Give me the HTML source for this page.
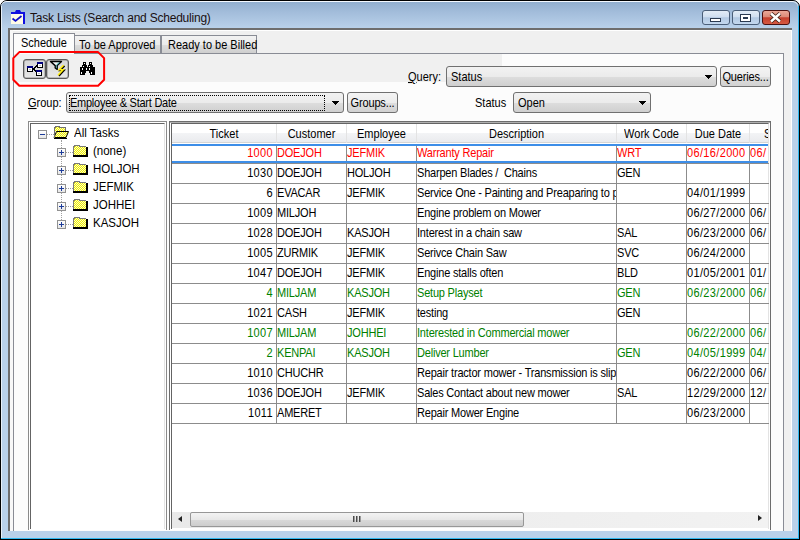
<!DOCTYPE html>
<html><head><meta charset="utf-8">
<style>
*{margin:0;padding:0;box-sizing:border-box}
html,body{width:800px;height:540px;overflow:hidden;background:#fff}
body{position:relative;font-family:"Liberation Sans",sans-serif;font-size:11px;color:#000}
.a{position:absolute}
.t{position:absolute;white-space:pre;line-height:12px;transform:scaleY(1.12);transform-origin:50% 25%}
#frame{left:0;top:0;width:800px;height:540px;background:#b9d1ea;border:1px solid #000;border-radius:7px 7px 0 0;}
#titlegrad{left:1px;top:1px;width:797px;height:27px;border-radius:6px 6px 0 0;border-top:1px solid #f4f9ff;background:linear-gradient(#92afcf 0%,#a3bddb 40%,#b9d1ea 100%)}
#client{left:8px;top:28px;width:784px;height:503px;background:#f0f0f0;border-top:2px solid #6e6e6e;border-left:2px solid #6e6e6e}
.tbtn{top:10px;width:28px;height:15px;border:1px solid #4a5e78;border-radius:3px;background:linear-gradient(#e2ecf6 0%,#d0dff0 45%,#b2c9e2 52%,#c4d8ee 100%)}
#close{background:linear-gradient(#eaa898 0%,#dc8a78 45%,#c4402e 52%,#d65a42 100%);border-color:#4a1010}
.tab{position:absolute;border:1px solid #898c95;border-bottom:none;background:linear-gradient(#f2f2f2 0%,#ebebeb 50%,#dddddd 51%,#cfcfcf 100%);white-space:pre;line-height:14px}
.combo{position:absolute;border:1px solid #707070;border-radius:3px;background:linear-gradient(#f2f2f2 0%,#ebebeb 50%,#dddddd 51%,#cfcfcf 100%)}
.btn{position:absolute;border:1px solid #707070;border-radius:3px;background:linear-gradient(#f4f4f4 0%,#ececec 50%,#dedede 51%,#d2d2d2 100%);text-align:center;letter-spacing:-0.15px}
.arrow{position:absolute;width:0;height:0;border-left:3.5px solid transparent;border-right:3.5px solid transparent;border-top:4px solid #000}
.tbb{position:absolute;border:1px solid #5a5a5a;border-radius:3px;background:linear-gradient(#d6d6d6,#e8e8e8);box-shadow:inset 0 0 0 0.5px #8a8a8a}
.row{position:absolute;left:172px;width:597px;height:20px;border-bottom:1px solid #8c8c8c;line-height:19px;font-size:11px;color:#000;letter-spacing:-0.2px}
.row span{position:absolute;top:0;height:19px;white-space:pre;overflow:hidden;padding-left:0;border-right:1px solid #8c8c8c}
.row .c0{left:0;width:105px;text-align:right;padding-right:3px}
.row .c1{left:105px;width:70px}
.row .c2{left:175px;width:70px}
.row .c3{left:245px;width:200px}
.row .c4{left:445px;width:70px}
.row .c5{left:515px;width:63px}
.row .c6{left:578px;width:19px;border-right:none}
.row .c0,.row .c5,.row .c6{letter-spacing:0.35px}
.row i{font-style:normal;display:inline-block;transform:scaleY(1.12);transform-origin:50% 50%}
.red{color:#ff0000}
.grn{color:#008000}
.hdr{position:absolute;top:0;height:19px;line-height:19px;text-align:center;border-right:1px solid #e3e3e3}
.tree .t{font-size:11.5px}
.box{position:absolute;width:9px;height:9px;border:1px solid #919191;background:linear-gradient(#fff,#e6e6e6)}
.box:before{content:"";position:absolute;left:1px;top:3px;width:5px;height:1px;background:#1d3c9a}
.box.p:after{content:"";position:absolute;left:3px;top:1px;width:1px;height:5px;background:#1d3c9a}
.dl{position:absolute;border-color:#a0a0a0;border-style:dotted;border-width:0}
.sy{font-style:normal;display:inline-block;transform:scaleY(1.12);transform-origin:50% 25%}
</style></head>
<body>
<div class="a" id="frame"></div>
<div class="a" id="titlegrad"></div>
<div class="a" style="left:799px;top:6px;width:1px;height:534px;background:#000"></div>
<div class="a" style="left:798px;top:6px;width:1px;height:533px;background:#2fb8f0"></div>
<div class="a" style="left:0;top:539px;width:800px;height:1px;background:#000"></div>
<div class="a" style="left:1px;top:538px;width:798px;height:1px;background:#2fb8f0"></div>
<div class="a" style="left:1px;top:6px;width:1px;height:532px;background:#e8f0f8"></div>
<svg class="a" style="left:11px;top:9px" width="15" height="16" viewBox="0 0 15 16">
<rect x="0" y="4" width="13" height="11" fill="#fffbe6"/>
<rect x="12" y="3" width="2" height="12" fill="#1010e0"/>
<path d="M0 3 H14 V5 H0 Z" fill="#1010e0"/>
<path d="M4 3 L5 1 H9 L10 3 Z" fill="#1010e0"/>
<path d="M1.5 9.5 L4.5 12 L10.5 7" fill="none" stroke="#1010c8" stroke-width="1.7"/>
</svg>
<div class="t" style="left:30px;top:12px;font-size:12px;transform:none;color:#1a1010;letter-spacing:-0.22px">Task Lists (Search and Scheduling)</div>
<div class="a tbtn" style="left:702px"></div>
<div class="a tbtn" style="left:732px"></div>
<div class="a tbtn" id="close" style="left:762px"></div>
<div class="a" style="left:710px;top:18px;width:11px;height:4px;background:#fff;border:1px solid #2a3a50"></div>
<div class="a" style="left:740px;top:14px;width:11px;height:8px;background:#fff;border:1px solid #2a3a50"></div>
<div class="a" style="left:743px;top:17px;width:5px;height:2px;background:#8aa;border:1px solid #2a3a50"></div>
<svg class="a" style="left:769px;top:12px" width="13" height="11" viewBox="0 0 13 11"><path d="M2 1.5 L11 9.5 M11 1.5 L2 9.5" stroke="#3a1a10" stroke-width="4"/><path d="M2 1.5 L11 9.5 M11 1.5 L2 9.5" stroke="#fff" stroke-width="2.4"/></svg>

<div class="a" id="client"></div>
<div class="a" style="left:791px;top:30px;width:1px;height:501px;background:#fff"></div>
<div class="a" style="left:10px;top:30px;width:781px;height:1px;background:#fff"></div>
<div class="a" style="left:10px;top:30px;width:3px;height:501px;background:#f8f8f8"></div>

<!-- tab page -->
<div class="a" style="left:13px;top:53px;width:771px;height:478px;background:#fcfcfc;border:1px solid #898c95;border-bottom:none"></div>
<div class="a" style="left:14px;top:54px;width:488px;height:28px;background:#f0f0f0"></div>
<div class="tab" style="left:74px;top:35px;width:87px;height:18px;padding:1px 0 0 4px"><i class="sy">To be Approved</i></div>
<div class="tab" style="left:161px;top:35px;width:96px;height:18px;padding:1px 0 0 6px"><i class="sy">Ready to be Billed</i></div>
<div class="tab" style="left:13px;top:33px;width:62px;height:21px;background:#fcfcfc;padding:1px 0 0 7px"><i class="sy">Schedule</i></div>

<!-- toolbar -->
<div class="tbb" style="left:23px;top:59px;width:23px;height:20px"></div>
<div class="tbb" style="left:46px;top:59px;width:23px;height:20px"></div>
<svg class="a" style="left:26px;top:61px" width="19" height="16" viewBox="0 0 19 16" shape-rendering="crispEdges">
<path d="M7 7 H8 V6 H9 V5 H10 V4 H11 M7 8 H8 V9 H9 V10 H10" fill="none" stroke="#000" stroke-width="1"/>
<rect x="1.5" y="5.5" width="5" height="5" fill="#fff" stroke="#000"/><rect x="1" y="5" width="6" height="2" fill="#000080"/><rect x="3" y="8" width="2" height="1" fill="#c0c0c0"/>
<rect x="11.5" y="1.5" width="5" height="5" fill="#fff" stroke="#000"/><rect x="11" y="1" width="6" height="2" fill="#000080"/><rect x="13" y="4" width="2" height="1" fill="#c0c0c0"/>
<rect x="10.5" y="9.5" width="5" height="5" fill="#fff" stroke="#000"/><rect x="10" y="9" width="6" height="2" fill="#000080"/><rect x="12" y="12" width="2" height="1" fill="#c0c0c0"/>
</svg>
<svg class="a" style="left:49px;top:60px" width="19" height="17" viewBox="0 0 19 17">
<path d="M1.5 1.5 H12.5 L8.2 5.6 V9.4 L6.2 8 V5.6 Z" fill="#f4f8f8" stroke="#000" stroke-width="1.4" stroke-linejoin="round"/>
<path d="M9.6 2.4 H11 L8 5.2 V8.4 L7.4 8 V5 Z" fill="#2a9a9a"/>
<path d="M14.6 5.2 L10.2 9.8 H14 L9 15.2" fill="none" stroke="#000" stroke-width="1.8" transform="translate(0.9,0.6)"/>
<path d="M14.6 5.2 L10.2 9.8 H14 L9 15.2" fill="none" stroke="#ffee10" stroke-width="1.6"/>
</svg>
<svg class="a" style="left:80px;top:62px" width="15" height="13" viewBox="0 0 15 13" shape-rendering="crispEdges">
<path d="M3 0h3v3h-3z M9 0h3v3h-3z M2 3h5v2h-5z M8 3h5v2h-5z M0 5h15v4h-15z M0 9h5v4h-5z M10 9h5v4h-5z M5 9h1v2h-1z M9 9h1v2h-1z" fill="#000"/>
<path d="M4 1h1v1h-1z M10 1h1v1h-1z M3 4h1v1h-1z M9 4h1v1h-1z M2 6h1v2h-1z M6 6h1v2h-1z M9 6h1v2h-1z M1 10h1v2h-1z M11 10h1v2h-1z" fill="#fff"/>
</svg>
<svg class="a" style="left:12px;top:50px" width="95" height="38" viewBox="0 0 95 38">
<path d="M7.3 2.1 H86.1 L92.1 8.1 V29.8 L86.1 35.8 H7.3 L1.3 29.8 V8.1 Z" fill="none" stroke="#ff0000" stroke-width="2" stroke-linejoin="round"/>
</svg>

<!-- query row -->
<div class="t" style="left:408px;top:70px"><u>Q</u>uery:</div>
<div class="combo" style="left:446px;top:66px;width:271px;height:21px"></div>
<div class="t" style="left:451px;top:70px">Status</div>
<svg class="a" style="left:705px;top:75px" width="7" height="4" viewBox="0 0 7 4" shape-rendering="crispEdges"><path d="M0 0h7v1h-1v1h-1v1h-1v1h-1v-1h-1v-1h-1v-1h-1z" fill="#000"/></svg>
<div class="btn" style="left:720px;top:66px;width:51px;height:21px;line-height:19px"><i class="sy">Queries...</i></div>

<!-- group row -->
<div class="t" style="left:28px;top:96px"><u>G</u>roup:</div>
<div class="combo" style="left:66px;top:92px;width:278px;height:21px"></div>
<div class="a" style="left:69px;top:95px;width:256px;height:16px;border:1px dotted #000"></div>
<div class="t" style="left:70px;top:96px;letter-spacing:-0.25px">Employee &amp; Start Date</div>
<svg class="a" style="left:332px;top:101px" width="7" height="4" viewBox="0 0 7 4" shape-rendering="crispEdges"><path d="M0 0h7v1h-1v1h-1v1h-1v1h-1v-1h-1v-1h-1v-1h-1z" fill="#000"/></svg>
<div class="btn" style="left:347px;top:92px;width:51px;height:21px;line-height:19px"><i class="sy">Groups...</i></div>
<div class="t" style="left:475px;top:96px">Status</div>
<div class="combo" style="left:513px;top:92px;width:138px;height:21px"></div>
<div class="t" style="left:518px;top:96px">Open</div>
<svg class="a" style="left:639px;top:101px" width="7" height="4" viewBox="0 0 7 4" shape-rendering="crispEdges"><path d="M0 0h7v1h-1v1h-1v1h-1v1h-1v-1h-1v-1h-1v-1h-1z" fill="#000"/></svg>

<!-- tree panel -->
<div class="a" style="left:28px;top:121px;width:139px;height:409px;border:1px solid #8a8a8a;border-bottom:none;background:#fff"></div>
<div class="a" style="left:30px;top:123px;width:135px;height:406px;border-top:1px solid #646464;border-left:1px solid #646464;border-right:1px solid #e3e3e3"></div>
<div class="tree">
<svg width="0" height="0" style="position:absolute"><defs>
<pattern id="dz" width="2" height="2" patternUnits="userSpaceOnUse"><rect width="2" height="2" fill="#fafac8"/><rect width="1" height="1" fill="#f0f000"/><rect x="1" y="1" width="1" height="1" fill="#f0f000"/></pattern>
</defs></svg>
<div class="dl" style="left:47px;top:134px;width:7px;border-top-width:1px"></div>
<div class="dl" style="left:61px;top:140px;height:84px;border-left-width:1px"></div>
<div class="box" style="left:38px;top:130px"></div>
<svg class="a" style="left:53px;top:126px" width="17" height="14" viewBox="0 0 17 14" shape-rendering="crispEdges">
<rect x="1" y="1" width="12" height="5" fill="url(#dz)"/>
<path d="M1.5 6 V1.5 H2.5 V0.5 H6.5 V1.5 H12.5 V5" fill="none" stroke="#707070"/>
<path d="M1 11.5 L3.5 5.5 H15.5 L13 11.5 Z" fill="url(#dz)" stroke="#000" shape-rendering="auto"/>
<path d="M1 5 V12" stroke="#707070"/>
<rect x="1" y="12" width="13" height="1" fill="#000"/>
</svg>
<div class="t" style="left:74px;top:126px">All Tasks</div>
<div class="dl" style="left:66px;top:152px;width:7px;border-top-width:1px"></div>
<div class="box p" style="left:57px;top:148px"></div>
<svg class="a" style="left:73px;top:144px" width="15" height="14" viewBox="0 0 15 14" shape-rendering="crispEdges"><rect x="0" y="2" width="13" height="9" fill="url(#dz)"/><rect x="1" y="1" width="5" height="1" fill="url(#dz)"/><path d="M0.5 11 V2.5 H1.5 V1 M1 1.5 H6.5 V2.5 H13" fill="none" stroke="#7a7a7a"/><rect x="0" y="11" width="15" height="2" fill="#000"/><rect x="13" y="3" width="2" height="10" fill="#000"/></svg>
<div class="t" style="left:93px;top:144px">(none)</div>
<div class="dl" style="left:66px;top:170px;width:7px;border-top-width:1px"></div>
<div class="box p" style="left:57px;top:166px"></div>
<svg class="a" style="left:73px;top:162px" width="15" height="14" viewBox="0 0 15 14" shape-rendering="crispEdges"><rect x="0" y="2" width="13" height="9" fill="url(#dz)"/><rect x="1" y="1" width="5" height="1" fill="url(#dz)"/><path d="M0.5 11 V2.5 H1.5 V1 M1 1.5 H6.5 V2.5 H13" fill="none" stroke="#7a7a7a"/><rect x="0" y="11" width="15" height="2" fill="#000"/><rect x="13" y="3" width="2" height="10" fill="#000"/></svg>
<div class="t" style="left:93px;top:162px">HOLJOH</div>
<div class="dl" style="left:66px;top:188px;width:7px;border-top-width:1px"></div>
<div class="box p" style="left:57px;top:184px"></div>
<svg class="a" style="left:73px;top:180px" width="15" height="14" viewBox="0 0 15 14" shape-rendering="crispEdges"><rect x="0" y="2" width="13" height="9" fill="url(#dz)"/><rect x="1" y="1" width="5" height="1" fill="url(#dz)"/><path d="M0.5 11 V2.5 H1.5 V1 M1 1.5 H6.5 V2.5 H13" fill="none" stroke="#7a7a7a"/><rect x="0" y="11" width="15" height="2" fill="#000"/><rect x="13" y="3" width="2" height="10" fill="#000"/></svg>
<div class="t" style="left:93px;top:180px">JEFMIK</div>
<div class="dl" style="left:66px;top:206px;width:7px;border-top-width:1px"></div>
<div class="box p" style="left:57px;top:202px"></div>
<svg class="a" style="left:73px;top:198px" width="15" height="14" viewBox="0 0 15 14" shape-rendering="crispEdges"><rect x="0" y="2" width="13" height="9" fill="url(#dz)"/><rect x="1" y="1" width="5" height="1" fill="url(#dz)"/><path d="M0.5 11 V2.5 H1.5 V1 M1 1.5 H6.5 V2.5 H13" fill="none" stroke="#7a7a7a"/><rect x="0" y="11" width="15" height="2" fill="#000"/><rect x="13" y="3" width="2" height="10" fill="#000"/></svg>
<div class="t" style="left:93px;top:198px">JOHHEI</div>
<div class="dl" style="left:66px;top:224px;width:7px;border-top-width:1px"></div>
<div class="box p" style="left:57px;top:220px"></div>
<svg class="a" style="left:73px;top:216px" width="15" height="14" viewBox="0 0 15 14" shape-rendering="crispEdges"><rect x="0" y="2" width="13" height="9" fill="url(#dz)"/><rect x="1" y="1" width="5" height="1" fill="url(#dz)"/><path d="M0.5 11 V2.5 H1.5 V1 M1 1.5 H6.5 V2.5 H13" fill="none" stroke="#7a7a7a"/><rect x="0" y="11" width="15" height="2" fill="#000"/><rect x="13" y="3" width="2" height="10" fill="#000"/></svg>
<div class="t" style="left:93px;top:216px">KASJOH</div>
</div>

<!-- grid -->
<div class="a" style="left:169px;top:121px;width:602px;height:409px;border:1px solid #6d6d6d;border-bottom:none;background:#fff"></div>
<div class="a" style="left:170px;top:122px;width:600px;height:1px;background:#b0b0b0"></div>
<div class="a" style="left:171px;top:123px;width:598px;height:406px;border-top:1px solid #646464;border-left:1px solid #646464;border-right:1px solid #e3e3e3"></div>
<div class="a" style="left:172px;top:124px;width:596px;height:19px;background:linear-gradient(#ffffff 0%,#ffffff 50%,#f3f4f6 51%,#eaebee 100%);border-bottom:1px solid #d5d5d5"></div>
<div class="a" style="left:172px;top:124px;width:596px;height:19px;overflow:hidden">
<div class="hdr" style="left:0;width:105px"><i class="sy">Ticket</i></div>
<div class="hdr" style="left:105px;width:70px"><i class="sy">Customer</i></div>
<div class="hdr" style="left:175px;width:70px"><i class="sy">Employee</i></div>
<div class="hdr" style="left:245px;width:200px"><i class="sy">Description</i></div>
<div class="hdr" style="left:445px;width:70px"><i class="sy">Work Code</i></div>
<div class="hdr" style="left:515px;width:63px"><i class="sy">Due Date</i></div>
<div class="hdr" style="left:578px;width:19px;text-align:left;padding-left:14px;border-right:none"><i class="sy">S</i></div>
</div>
<div class="row red" style="top:144px"><span class="c0"><i>1000</i></span><span class="c1"><i>DOEJOH</i></span><span class="c2"><i>JEFMIK</i></span><span class="c3"><i>Warranty Repair</i></span><span class="c4"><i>WRT</i></span><span class="c5"><i>06/16/2000</i></span><span class="c6"><i>06/</i></span></div>
<div class="row" style="top:164px"><span class="c0"><i>1030</i></span><span class="c1"><i>DOEJOH</i></span><span class="c2"><i>HOLJOH</i></span><span class="c3"><i>Sharpen Blades /  Chains</i></span><span class="c4"><i>GEN</i></span><span class="c5"></span><span class="c6"></span></div>
<div class="row" style="top:184px"><span class="c0"><i>6</i></span><span class="c1"><i>EVACAR</i></span><span class="c2"><i>JEFMIK</i></span><span class="c3"><i>Service One - Painting and Preaparing to paint</i></span><span class="c4"></span><span class="c5"><i>04/01/1999</i></span><span class="c6"></span></div>
<div class="row" style="top:204px"><span class="c0"><i>1009</i></span><span class="c1"><i>MILJOH</i></span><span class="c2"></span><span class="c3"><i>Engine problem on Mower</i></span><span class="c4"></span><span class="c5"><i>06/27/2000</i></span><span class="c6"><i>06/</i></span></div>
<div class="row" style="top:224px"><span class="c0"><i>1028</i></span><span class="c1"><i>DOEJOH</i></span><span class="c2"><i>KASJOH</i></span><span class="c3"><i>Interest in a chain saw</i></span><span class="c4"><i>SAL</i></span><span class="c5"><i>06/23/2000</i></span><span class="c6"><i>06/</i></span></div>
<div class="row" style="top:244px"><span class="c0"><i>1005</i></span><span class="c1"><i>ZURMIK</i></span><span class="c2"><i>JEFMIK</i></span><span class="c3"><i>Serivce Chain Saw</i></span><span class="c4"><i>SVC</i></span><span class="c5"><i>06/24/2000</i></span><span class="c6"></span></div>
<div class="row" style="top:264px"><span class="c0"><i>1047</i></span><span class="c1"><i>DOEJOH</i></span><span class="c2"><i>JEFMIK</i></span><span class="c3"><i>Engine stalls often</i></span><span class="c4"><i>BLD</i></span><span class="c5"><i>01/05/2001</i></span><span class="c6"><i>01/</i></span></div>
<div class="row grn" style="top:284px"><span class="c0"><i>4</i></span><span class="c1"><i>MILJAM</i></span><span class="c2"><i>KASJOH</i></span><span class="c3"><i>Setup Playset</i></span><span class="c4"><i>GEN</i></span><span class="c5"><i>06/23/2000</i></span><span class="c6"><i>06/</i></span></div>
<div class="row" style="top:304px"><span class="c0"><i>1021</i></span><span class="c1"><i>CASH</i></span><span class="c2"><i>JEFMIK</i></span><span class="c3"><i>testing</i></span><span class="c4"><i>GEN</i></span><span class="c5"></span><span class="c6"></span></div>
<div class="row grn" style="top:324px"><span class="c0"><i>1007</i></span><span class="c1"><i>MILJAM</i></span><span class="c2"><i>JOHHEI</i></span><span class="c3"><i>Interested in Commercial mower</i></span><span class="c4"></span><span class="c5"><i>06/22/2000</i></span><span class="c6"><i>06/</i></span></div>
<div class="row grn" style="top:344px"><span class="c0"><i>2</i></span><span class="c1"><i>KENPAI</i></span><span class="c2"><i>KASJOH</i></span><span class="c3"><i>Deliver Lumber</i></span><span class="c4"><i>GEN</i></span><span class="c5"><i>04/05/1999</i></span><span class="c6"><i>04/</i></span></div>
<div class="row" style="top:364px"><span class="c0"><i>1010</i></span><span class="c1"><i>CHUCHR</i></span><span class="c2"></span><span class="c3"><i>Repair tractor mower - Transmission is slipping</i></span><span class="c4"></span><span class="c5"><i>06/22/2000</i></span><span class="c6"><i>06/</i></span></div>
<div class="row" style="top:384px"><span class="c0"><i>1036</i></span><span class="c1"><i>DOEJOH</i></span><span class="c2"><i>JEFMIK</i></span><span class="c3"><i>Sales Contact about new mower</i></span><span class="c4"><i>SAL</i></span><span class="c5"><i>12/29/2000</i></span><span class="c6"><i>12/</i></span></div>
<div class="row" style="top:404px"><span class="c0"><i>1011</i></span><span class="c1"><i>AMERET</i></span><span class="c2"></span><span class="c3"><i>Repair Mower Engine</i></span><span class="c4"></span><span class="c5"><i>06/23/2000</i></span><span class="c6"></span></div>
<div class="a" style="left:172px;top:144px;width:596px;height:2px;background:#3d8ee8"></div>
<div class="a" style="left:172px;top:161px;width:596px;height:2px;background:#3d8ee8"></div>

<!-- h scrollbar -->
<div class="a" style="left:172px;top:512px;width:596px;height:16px;background:linear-gradient(90deg,#e9e9e9,#f2f2f2)"></div>
<div class="a" style="left:190px;top:512px;width:334px;height:15px;border:1px solid #979797;border-radius:2px;background:linear-gradient(#f3f3f3 0%,#e8e8e8 50%,#d9d9d9 51%,#cdcdcd 100%)"></div>
<div class="a" style="left:353px;top:516px;width:1px;height:6px;background:#4a4a4a;box-shadow:1px 0 0 #9a9a9a"></div>
<div class="a" style="left:356px;top:516px;width:1px;height:6px;background:#4a4a4a;box-shadow:1px 0 0 #9a9a9a"></div>
<div class="a" style="left:359px;top:516px;width:1px;height:6px;background:#4a4a4a;box-shadow:1px 0 0 #9a9a9a"></div>
<div class="a" style="left:178px;top:516px;width:0;height:0;border-top:3.5px solid transparent;border-bottom:3.5px solid transparent;border-right:4px solid #222"></div>
<div class="a" style="left:758px;top:515px;width:0;height:0;border-top:3.5px solid transparent;border-bottom:3.5px solid transparent;border-left:4px solid #222"></div>
</body></html>
